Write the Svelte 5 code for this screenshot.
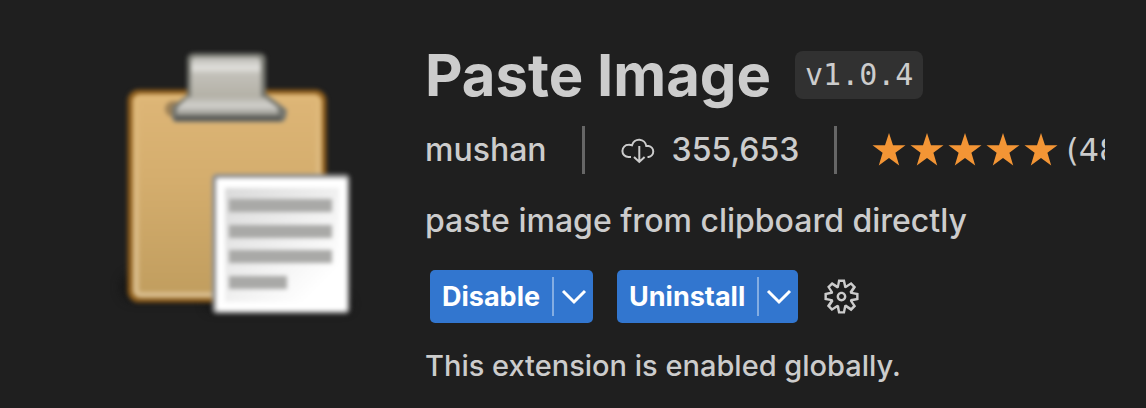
<script>
  const stars = [1, 2, 3, 4, 5];
  const actions = ['Disable', 'Uninstall'];
  const lines = [
    { y: 163, width: 103 },
    { y: 189, width: 103 },
    { y: 214, width: 103 },
    { y: 240, width: 58 }
  ];
</script>

<main class="header">
  <svg class="logo" viewBox="0 0 256 288" role="img" aria-label="Clipboard">
    <defs>
      <linearGradient id="board" x1="0" y1="0" x2="0" y2="1">
        <stop offset="0" stop-color="#deb677" />
        <stop offset="0.4" stop-color="#d5ae6e" />
        <stop offset="1" stop-color="#c09d5e" />
      </linearGradient>
      <linearGradient id="edge" x1="0" y1="0" x2="0" y2="1">
        <stop offset="0" stop-color="#dfb878" />
        <stop offset="1" stop-color="#d8bc8c" />
      </linearGradient>
      <linearGradient id="clip" x1="0" y1="0" x2="0" y2="1">
        <stop offset="0" stop-color="#b9b8b2" />
        <stop offset="0.26" stop-color="#e2e1dd" />
        <stop offset="0.4" stop-color="#c2c0b9" />
        <stop offset="1" stop-color="#b2afa4" />
      </linearGradient>
      <linearGradient id="base" x1="0" y1="0" x2="0" y2="1">
        <stop offset="0" stop-color="#b5b3aa" />
        <stop offset="0.5" stop-color="#d2d1cd" />
        <stop offset="1" stop-color="#96958d" />
      </linearGradient>
      <linearGradient id="sheet" x1="0" y1="0" x2="1" y2="1">
        <stop offset="0" stop-color="#dadada" />
        <stop offset="0.85" stop-color="#ffffff" />
      </linearGradient>
      <filter id="soft" x="-10%" y="-10%" width="120%" height="120%" color-interpolation-filters="sRGB">
        <feGaussianBlur stdDeviation="2" />
      </filter>
      <filter id="shade" x="-30%" y="-120%" width="160%" height="340%" color-interpolation-filters="sRGB">
        <feGaussianBlur stdDeviation="6" />
      </filter>
    </defs>
    <rect x="14" y="238" width="110" height="26" rx="12" fill="#101010" opacity=".8" filter="url(#shade)" />
    <rect x="98" y="262" width="144" height="12" rx="6" fill="#101010" opacity=".8" filter="url(#shade)" />
    <g filter="url(#soft)">
      <rect x="22" y="56" width="194" height="208" rx="9" fill="url(#board)" stroke="#8b5c1c" stroke-width="5" />
      <rect x="28" y="61" width="183" height="198" rx="5" fill="none" stroke="url(#edge)" stroke-width="6" />
      <ellipse cx="66" cy="73" rx="9" ry="8" fill="#4d4030" opacity=".45" />
      <path d="M79 24q0-7 8-7h63q8 0 8 7v34l16 12 5 4-1 7q-1 5-6 5H69q-5 0-5-5V71l15-12z" fill="#75766f" />
      <path d="M83 26q0-5 5-5h60q5 0 5 5v38H83z" fill="url(#clip)" />
      <path d="M80 61h76l14 11v7H69v-7z" fill="url(#base)" />
      <path d="M67 80h106v5H67z" fill="#5b5c58" />
      <rect x="104" y="138" width="138" height="140" rx="5" fill="#8f8f8f" />
      <rect x="108" y="142" width="131" height="133" rx="3" fill="#ffffff" />
      <rect x="117" y="152" width="114" height="114" fill="url(#sheet)" />
      {#each lines as line}
        <rect x="121" y={line.y} width={line.width} height="13" fill="#a9a9a7" />
      {/each}
    </g>
  </svg>

  <section class="details">
    <div class="title">
      <h1>Paste Image</h1>
      <code class="version">v1.0.4</code>
    </div>

    <div class="meta">
      <span class="publisher">mushan</span>
      <span class="installs">
        <svg class="cloud" viewBox="0 0 36 28" aria-hidden="true">
          <path d="M11 21H8.500A6.100 6.100 0 0 1 8.500 8.800Q10.500 8.700 12 9.200A7.300 7.300 0 0 1 26.300 10.100H28.500A5.500 5.500 0 0 1 28.500 21H27.500M19.300 10V26M14 21L19.300 26L24.600 21" />
        </svg>
        355,653
      </span>
      <span class="rating">
        {#each stars as star (star)}
          <svg class="star" viewBox="0 0 34 34" aria-hidden="true">
            <path d="M17 0L21 12.200H33.500L23.400 19.800L27.200 32.500L17 25L6.800 32.500L10.600 19.800L.5 12.200H13Z" />
          </svg>
        {/each}
        <span class="count">(48)</span>
      </span>
    </div>

    <p class="description">paste image from clipboard directly</p>

    <div class="actions">
      {#each actions as action (action)}
        <div class="split">
          <button class="primary" type="button">{action}</button>
          <button class="more" type="button" aria-label="{action} options">
            <svg viewBox="0 0 26 16" aria-hidden="true"><path d="M2 2L13 13L24 2" /></svg>
          </button>
        </div>
      {/each}
      <button class="manage" type="button" aria-label="Manage">
        <svg viewBox="0 0 16 16" aria-hidden="true">
          <path fill-rule="evenodd" d="M9.1 4.400L8.600 2H7.400l-.5 2.400-.7.3-2-1.300-.9.8 1.300 2-.2.7-2.400.5v1.200l2.400.5.3.8-1.300 2 .8.8 2-1.300.8.3.4 2.300h1.200l.5-2.400.8-.3 2 1.300.8-.8-1.300-2 .3-.8 2.300-.4V7.400l-2.400-.5-.3-.8 1.300-2-.8-.8-2 1.300-.7-.2zM9.400 1l.5 2.400L12 2.100l2 2-1.400 2.100 2.400.4v2.800l-2.400.5L14 12l-2 2-2.100-1.400-.5 2.400H6.600l-.5-2.400L4 13.900l-2-2 1.400-2.100L1 9.400V6.600l2.400-.5L2.100 4l2-2 2.100 1.400.4-2.400h2.800zM10 8c0 1.100-.9 2-2 2s-2-.9-2-2 .9-2 2-2 2 .9 2 2zM8 9c.6 0 1-.4 1-1s-.4-1-1-1-1 .4-1 1 .4 1 1 1z" />
        </svg>
      </button>
    </div>

    <p class="status">This extension is enabled globally.</p>
  </section>
</main>

<style>
  :global(body) {
    background: #1f1f1f;
  }

  .header {
    display: flex;
    align-items: flex-start;
    gap: 61px;
    padding: 36px 41px 16px 108px;
    color: #cccccc;
    font-family: Inter, "Liberation Sans", sans-serif;
    font-size: 32px;
    font-weight: 500;
    line-height: 42px;
  }

  .logo {
    flex: none;
    width: 256px;
    height: 288px;
  }

  .details {
    flex: 1;
    min-width: 0;
  }

  .title {
    display: flex;
    align-items: center;
    gap: 24px;
    height: 78px;
  }

  h1 {
    margin: 0;
    font-size: 58px;
    font-weight: 700;
    line-height: 78px;
    white-space: nowrap;
  }

  .version {
    padding: 0 10px;
    border-radius: 8px;
    background: #313131;
    font-family: "DejaVu Sans Mono", monospace;
    font-size: 30px;
    line-height: 48px;
  }

  .meta {
    display: flex;
    align-items: center;
    height: 48px;
    margin-top: 12px;
    overflow: hidden;
    white-space: nowrap;
  }

  .meta > span {
    display: flex;
    flex: none;
    align-items: center;
    height: 48px;
  }

  .meta > span + span {
    margin-left: 35px;
    padding-left: 35px;
    border-left: 3px solid #666666;
  }

  .installs {
    gap: 16px;
  }

  .cloud {
    width: 36px;
    height: 28px;
    fill: none;
    stroke: #cccccc;
    stroke-width: 2;
  }

  .rating {
    gap: 4px;
  }

  .star {
    width: 34px;
    height: 34px;
    fill: #f39535;
  }

  .count {
    margin-left: 4px;
    font-family: "DejaVu Sans", sans-serif;
  }

  p {
    margin: 0;
  }

  .description {
    margin-top: 26px;
  }

  .actions {
    display: flex;
    align-items: center;
    gap: 24px;
    margin: 28px 0 22px 5px;
  }

  .split {
    display: flex;
    height: 53px;
    border-radius: 5px;
    background: #3276cf;
  }

  button {
    margin: 0;
    border: 0;
    background: none;
    color: #ffffff;
    font: inherit;
  }

  .primary {
    padding: 0 12px;
    font-size: 27px;
    font-weight: 700;
  }

  .more {
    display: flex;
    align-items: center;
    height: 39px;
    margin-top: 7px;
    padding: 0 6px 0 7px;
    border-left: 2px solid #84ade2;
  }

  .more svg {
    width: 26px;
    height: 16px;
    fill: none;
    stroke: #ffffff;
    stroke-width: 3;
  }

  .manage {
    display: flex;
    padding: 0;
  }

  .manage svg {
    width: 39px;
    height: 39px;
    fill: #cccccc;
  }

  .status {
    font-size: 29px;
  }
</style>
